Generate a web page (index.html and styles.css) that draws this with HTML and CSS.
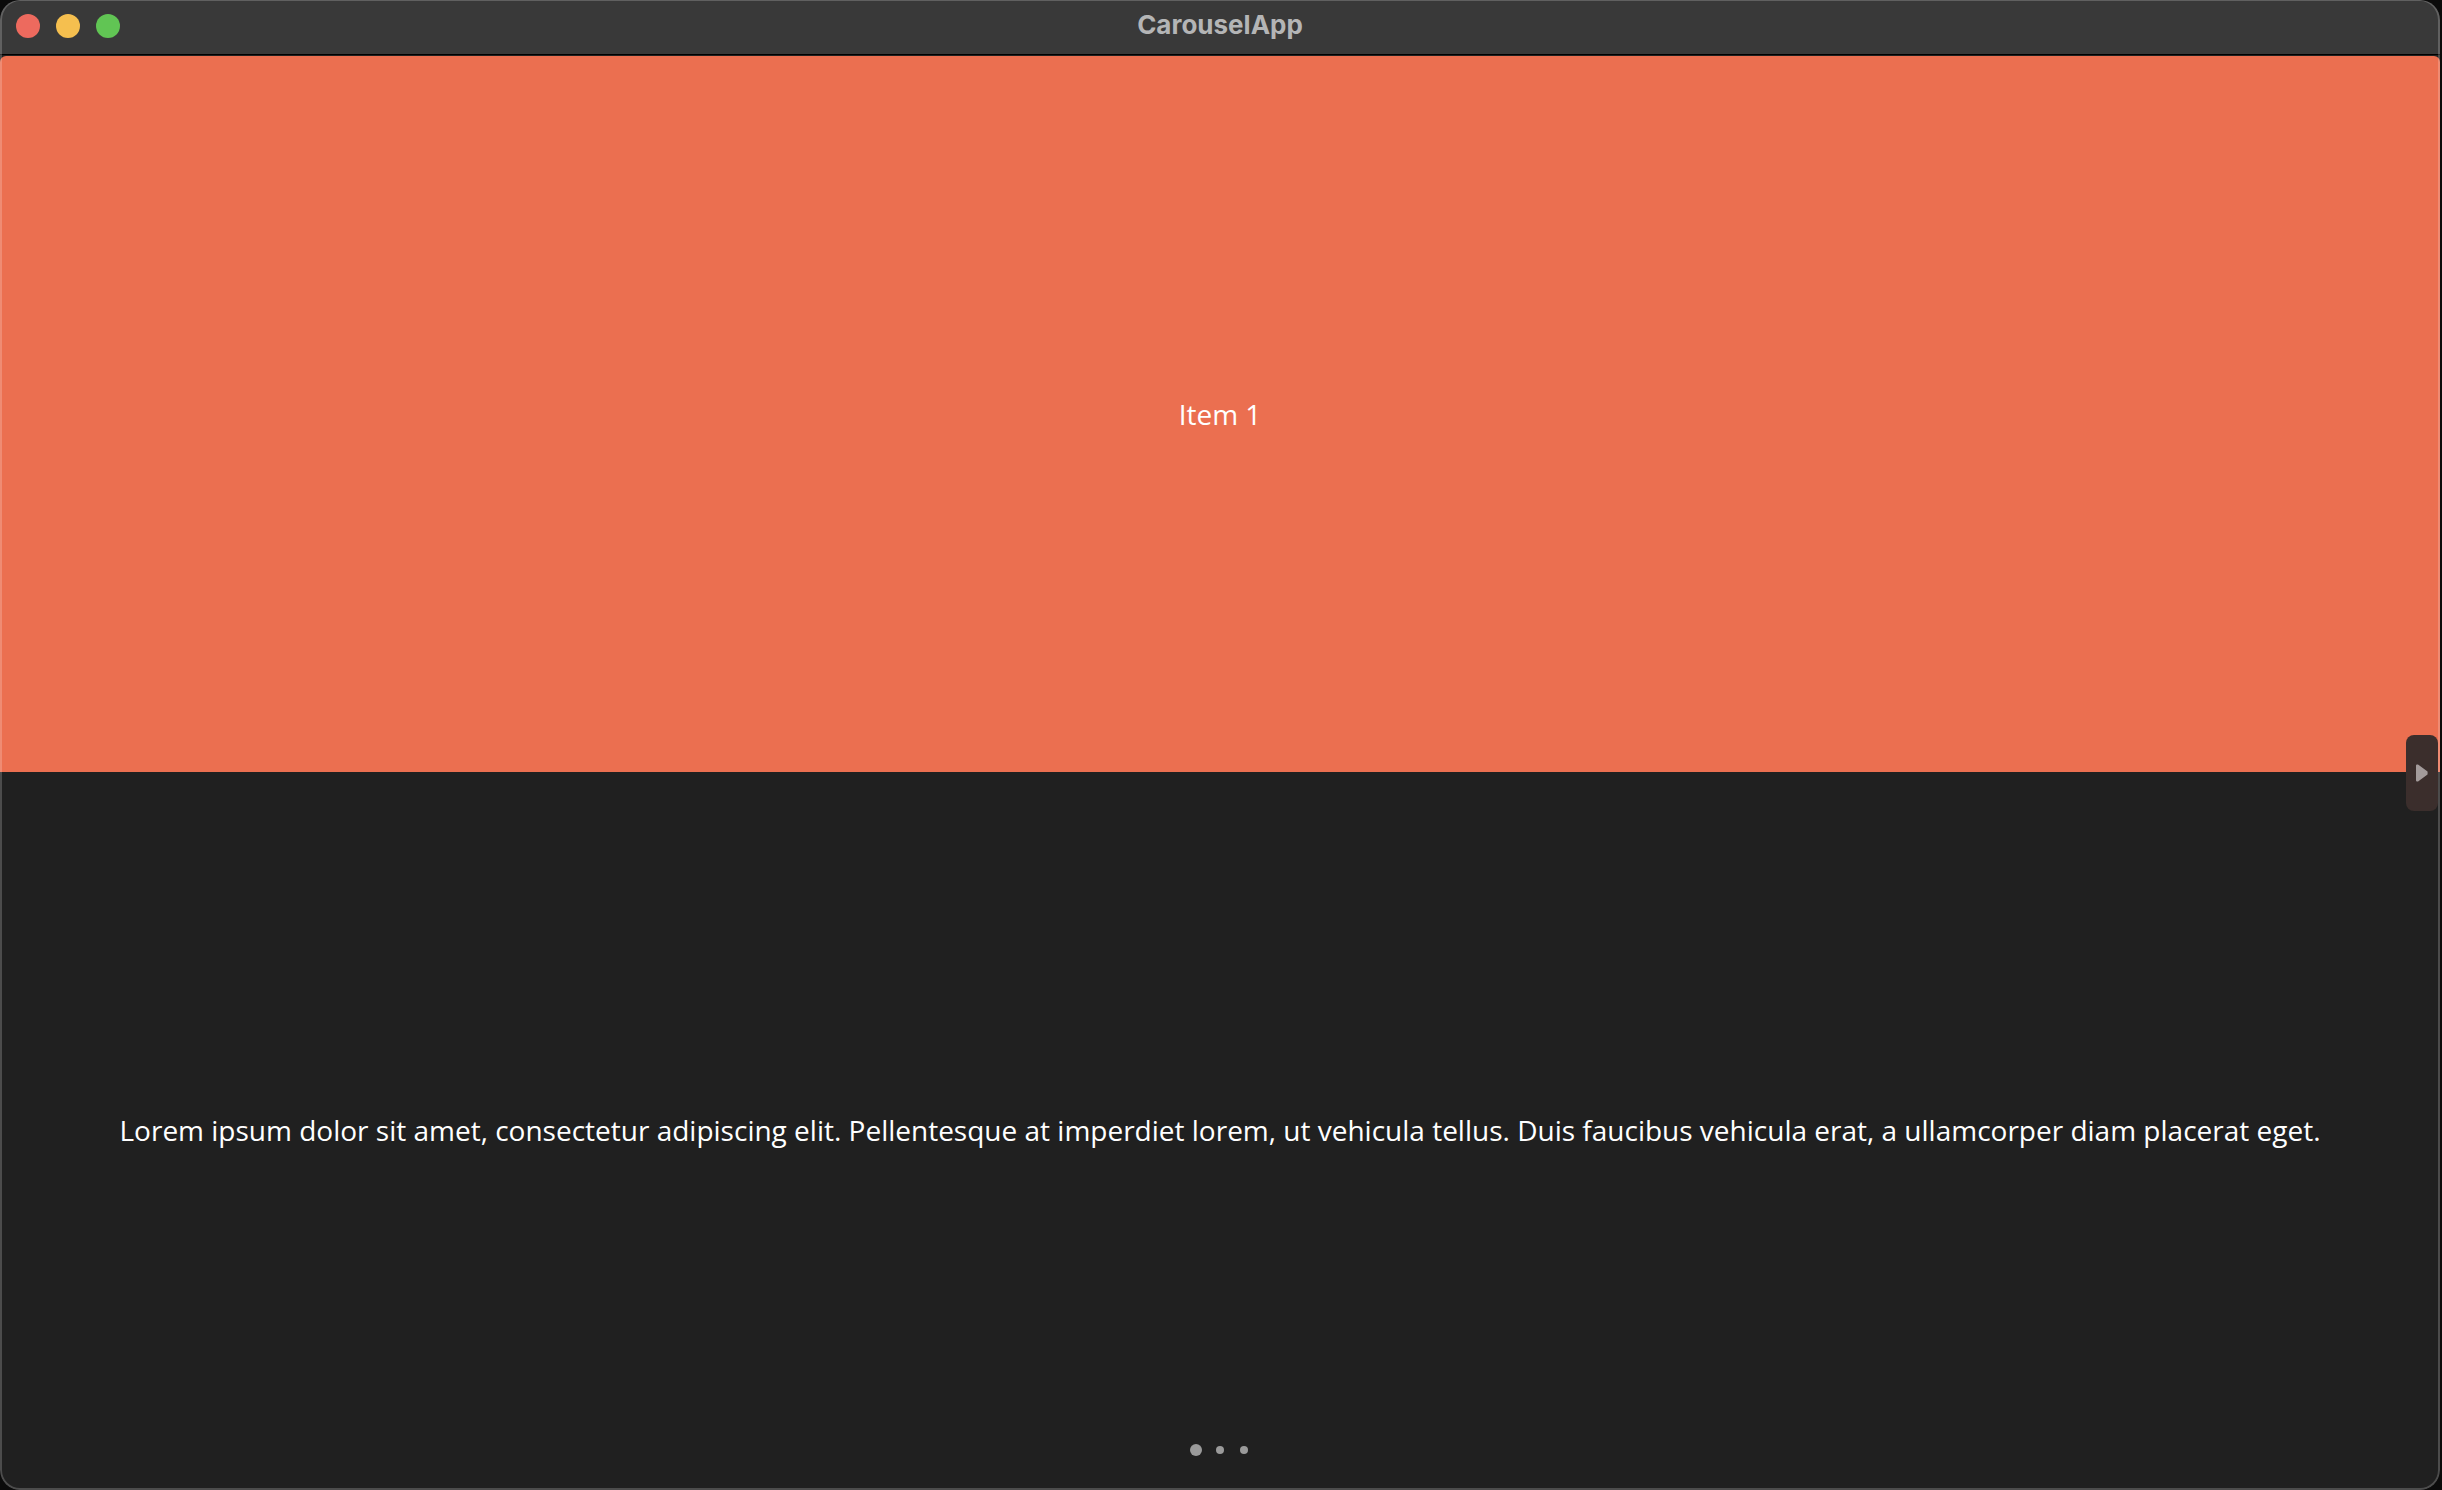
FILE: index.html
```html
<!DOCTYPE html>
<html lang="en">
<head>
<meta charset="utf-8">
<title>CarouselApp</title>
<link rel="stylesheet" href="styles.css">
</head>
<body>
<div class="window">
  <header class="titlebar">
    <div class="controls">
      <button class="control close" type="button" aria-label="Close"></button>
      <button class="control minimize" type="button" aria-label="Minimize"></button>
      <button class="control zoom" type="button" aria-label="Zoom"></button>
    </div>
    <h1 class="title">CarouselApp</h1>
  </header>
  <main class="carousel">
    <section class="panel item">
      <p class="text">Item 1</p>
    </section>
    <section class="panel description">
      <p class="text">Lorem ipsum dolor sit amet, consectetur adipiscing elit. Pellentesque at imperdiet lorem, ut vehicula tellus. Duis faucibus vehicula erat, a ullamcorper diam placerat eget.</p>
    </section>
    <button class="next" type="button" aria-label="Next item">
      <svg width="14" height="18" viewBox="0 0 14 18" aria-hidden="true"><path d="M2 1.6 L2.8 1.6 L11.6 8 V10 L2.8 16.4 L2 16.4 Z" fill="#a39b9b" stroke="#a39b9b" stroke-width="2" stroke-linejoin="round"/></svg>
    </button>
    <nav class="pager" aria-label="Pages">
      <button class="dot current" type="button" aria-label="Page 1" aria-current="true"></button>
      <button class="dot" type="button" aria-label="Page 2"></button>
      <button class="dot" type="button" aria-label="Page 3"></button>
    </nav>
  </main>
</div>
</body>
</html>
```
FILE: styles.css
```css
* {
  box-sizing: border-box;
}

body {
  margin: 0;
  padding-right: 2px;
  background: #0b0b0b;
}

button {
  border: 0;
  padding: 0;
}

.window {
  position: relative;
  display: flex;
  flex-direction: column;
  min-height: 100vh;
  border-radius: 20px;
  overflow: hidden;
  background: #202020;
}

/* Translucent hairline around the window */
.window::after {
  content: "";
  position: absolute;
  inset: 0;
  border: 2px solid rgba(255, 255, 255, 0.2);
  border-top: 1px solid rgba(255, 255, 255, 0.2);
  border-radius: 20px;
  pointer-events: none;
}

.titlebar {
  display: grid;
  grid-template-columns: 1fr auto 1fr;
  align-items: center;
  height: 55px;
  padding: 0 16px 2px;
  border-bottom: 1px solid #000;
  background: #393939;
}

.controls {
  display: flex;
  gap: 16px;
}

.control {
  width: 24px;
  height: 24px;
  border-radius: 50%;
}

.close {
  background: #ed6a5e;
}

.minimize {
  background: #f5bf4f;
}

.zoom {
  background: #61c554;
}

.title {
  margin: 0;
  padding-bottom: 2px;
  font: 700 26px/32px Inter, "Liberation Sans", sans-serif;
  color: #b4b5b6;
}

.carousel {
  position: relative;
  flex: 1;
  display: grid;
  grid-template-rows: 1fr 1fr;
  padding: 1px 0 2px;
}

.panel {
  display: flex;
  align-items: center;
  justify-content: center;
  padding: 0 32px;
}

.item {
  border-radius: 6px 6px 0 0;
  background: #eb6f50;
}

.text {
  margin: 0;
  font: 400 28px/38px "Open Sans", "Noto Sans", sans-serif;
  text-align: center;
  color: #fff;
}

.next {
  position: absolute;
  top: 50%;
  right: 2px;
  display: flex;
  align-items: center;
  justify-content: center;
  width: 32px;
  height: 76px;
  margin-top: -38px;
  border-radius: 8px;
  background: #3b2e2c;
}

.pager {
  position: absolute;
  bottom: 34px;
  left: 0;
  right: 0;
  display: grid;
  grid-template-columns: repeat(3, 24px);
  justify-content: center;
  place-items: center;
}

.dot {
  width: 8px;
  height: 8px;
  border-radius: 50%;
  background: #9a9a9a;
}

.current {
  width: 12px;
  height: 12px;
}
```
